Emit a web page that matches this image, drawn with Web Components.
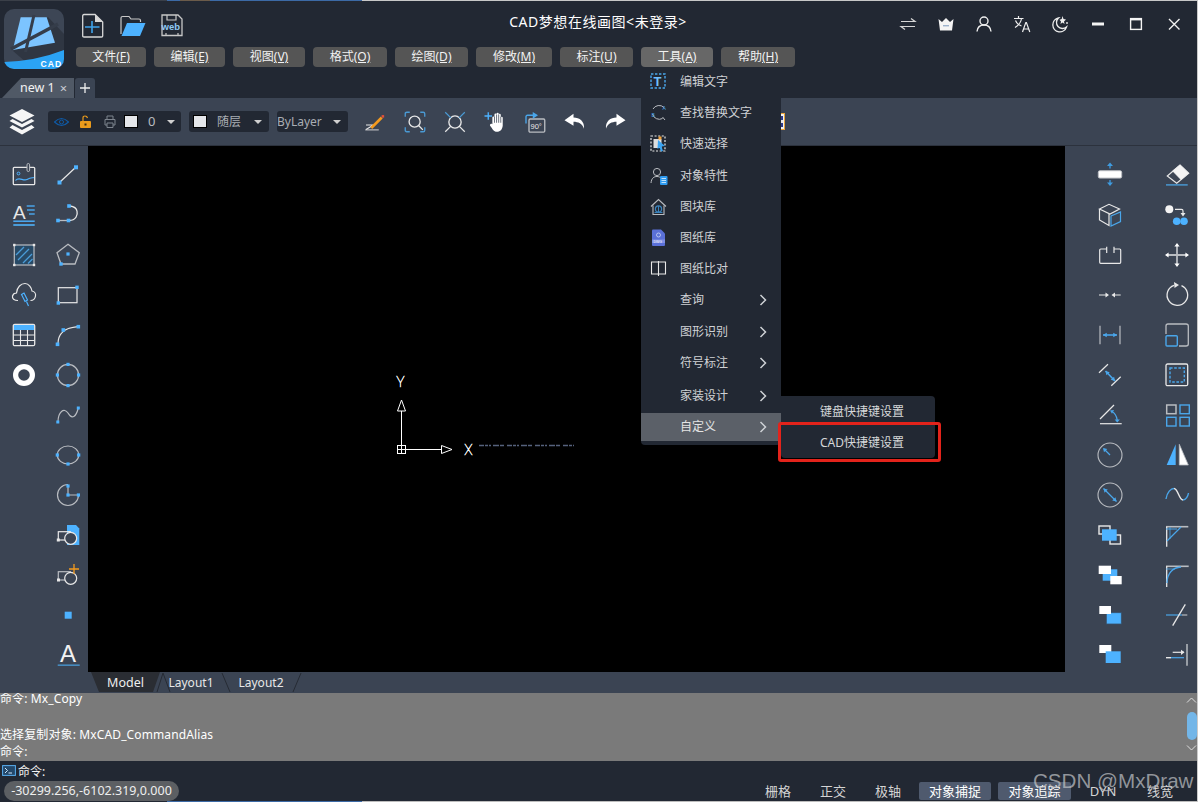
<!DOCTYPE html>
<html lang="zh"><head><meta charset="utf-8"><title>CAD梦想在线画图</title>
<style>
html,body{margin:0;padding:0;background:#222833;overflow:hidden}
body{font:12px/1.4 "Noto Sans","Noto Sans CJK SC",sans-serif;color:#e8e8e8}
</style></head><body><x-app></x-app>
<script>
const B='#4db2ff',W='#e8e8e8',G='#b9bcc1';
const sq=(x,y,s=4,c=B)=>`<rect x="${x-s/2}" y="${y-s/2}" width="${s}" height="${s}" fill="${c}"/>`;
const ln=(a,b,c,d,col=W,w=1.3)=>`<line x1="${a}" y1="${b}" x2="${c}" y2="${d}" stroke="${col}" stroke-width="${w}"/>`;
const R=(x,y,w,h,st=W,f='none',sw=1.3,r=0,extra='')=>`<rect x="${x}" y="${y}" width="${w}" height="${h}" rx="${r}" stroke="${st}" fill="${f}" stroke-width="${sw}" ${extra}/>`;
const P=(d,st=W,sw=1.3,f='none')=>`<path d="${d}" stroke="${st}" stroke-width="${sw}" fill="${f}"/>`;
const C=(x,y,r,st=W,sw=1.2,f='none')=>`<circle cx="${x}" cy="${y}" r="${r}" stroke="${st}" stroke-width="${sw}" fill="${f}"/>`;
const head=(x,y,t,col,s=4.4)=>`<path d="M${x} ${y}L${x-s*Math.cos(t-.55)} ${y-s*Math.sin(t-.55)}L${x-s*Math.cos(t+.55)} ${y-s*Math.sin(t+.55)}Z" fill="${col}"/>`;
const dbl=(a,b,c,d,col=B,w=1.6)=>{const an=Math.atan2(d-b,c-a);return ln(a,b,c,d,col,w)+head(c,d,an,col)+head(a,b,an+Math.PI,col)};
const T=(x,y,s,fs,f=W,extra='')=>`<text x="${x}" y="${y}" font-size="${fs}" fill="${f}" font-family="'Liberation Sans',sans-serif" ${extra}>${s}</text>`;
const ICONS={
 image:R(5.3,8.3,21.4,17.4,W,'none',1.3,1)+R(19,4.5,2.6,8,G,'#3b4453',1,1.3)+P('M7.5 21.5C11 17 15 22.5 19 20.5S24 19 26 18.5',B,1.2)+C(10.5,14.5,1.4,B,1),
 line:ln(8,23,23.5,8.5,W,1.2)+sq(7.5,23.5)+sq(24,8.3),
 mtext:T(5,19.5,'A',19,W)+ln(18.7,7,26.7,7,B)+ln(19,11,26.7,11,B)+ln(21,15,26.7,15,B)+R(5.3,21.5,21.4,1.4,'none',B,0)+R(5.3,25,21.4,2,'none','#4a9cd8',0),
 hatch:R(6.3,6,19.7,20,G,'#284a66',1.2)+P('M8 16L16 8M10 21L21 10M15 24L24 15M20 24.5L24.5 20','#4a9cd8',1.3)+sq(6.3,6,2.4,W)+sq(26,6,2.4,W)+sq(6.3,26,2.4,W)+sq(26,26,2.4,W),
 poly:P('M16 5.3L27.3 13.7L23 25H9L5 13.7Z',G,1.3)+sq(16,15,3.2)+sq(9,25,3.4),
 cloud:P('M10 21.5C6 21.5 4 19.5 4.5 17C5 15 7 14 8.5 14C9 8 13 4.5 17 4.5C21 4.5 23.5 9 24 12C26.5 12.5 28 14.5 27.5 17C27 20 25 21.5 22.5 21.5',W,1.2)+P('M13.5 15.5L16 14L19.5 21L17 22.5Z',B,1.2)+ln(18.5,22.5,20.5,27,B,1.2),
 rect:R(6.3,8.7,18.7,15,W,'none',1.2)+sq(25,8.3,3.4)+sq(6.3,24,3.4),
 table:R(5.3,5.3,21.4,21.4,W,'none',1.3,1.5)+`<rect x="6" y="6" width="20" height="5" fill="${B}"/>`+P('M5.5 16H26.5M5.5 21.5H26.5M12.5 11V26.5M19.5 11V26.5',W,1.1),
 arc:P('M6 25C6 16 10 9 26 7.7',W,1.2)+sq(5.5,25.3,3.6)+sq(11.3,11,3.6)+sq(26.3,7.7,3.6),
 donut:C(16,16,8.4,'#fff',5.2),
 circle:C(16,16,10.6,G,1.2)+sq(16,5.4,3.2)+sq(16,26.6,3.2)+sq(5.4,16,3.2)+sq(26.6,16,3.2),
 spline:P('M6 23C6 13 12 8 16 14C20 21 24 18 26.3 9',G,1.2)+sq(5.8,23,3)+sq(26.3,9,3),
 ellipse:`<ellipse cx="16" cy="16" rx="10.7" ry="9" stroke="${G}" fill="none" stroke-width="1.2"/>`+sq(5.3,16,3.2)+sq(26.7,16,3.2)+sq(16,25,3.2),
 pie:P('M16 6.5V16H26.5A10.5 10.5 0 1 1 16 5.5',G,1.2)+sq(16,7,3.2)+sq(16,16,3.2)+sq(26.4,16,3.2),
 block:P('M15 6H24L27.3 9.5V26H15Z',B,0,B)+R(6.3,12.7,12,8.3,W,'none',1.2)+C(18.7,19.3,6,W,1.2,'#3b4453')+sq(6.3,21,3,W),
 blockadd:R(6.3,12.7,12,8.3,G,'none',1.2)+C(18.7,19.3,6,W,1.2,'#3b4453')+sq(6.5,21,3,W)+P('M22 5V15M17 10H27','#f39a1e',1.3),
 point:`<rect x="12.7" y="12.7" width="7" height="7" fill="${B}"/>`,
 text:T(8,23.3,'A',24,'#f2f2f2')+R(5.7,25.5,22,1.3,'none','#4a9cd8',0),
 stretch:R(4.3,11.7,23.4,7.4,G,'#fff',1,1.5)+ln(16,5,16,9.6,'#3f9ce0',1.3)+P('M16 3.6L19 7H13Z','none',0,'#3f9ce0')+ln(16,21,16,25,'#3f9ce0',1.3)+P('M16 27L19 23.6H13Z','none',0,'#3f9ce0'),
 erase:P('M19 6L27.7 14.3L15.7 24.3L6.3 17Z',W,1.2)+P('M19 6L27.7 14.3L20 20.8L11.5 12Z',W,.5,'#f4f4f4')+R(5,25.2,21.7,1.4,'none','#4a9cd8',0),
 cube:P('M5.5 10L15 5.3L25.5 10L16 15ZM5.5 10V21L15 26.5V15',W,1.2)+P('M17 17L26.5 13V22.5L17 27Z','#4aa6ea',1.2),
 copyb:C(8.3,10.3,4,'#fff',0,'#f4f4f4')+C(15.7,22.3,3.8,B,0,B)+C(23,22.3,3.8,B,0,B)+P('M14 10.3H20.5Q22 10.3 22 12V15',W,1.2)+P('M19.5 14H24.5L22 17.5Z',W,0,W),
 gap:P('M12.7 10H6.7Q5.7 10 5.7 11V23.3Q5.7 24.3 6.7 24.3H25.7Q26.7 24.3 26.7 23.3V11Q26.7 10 25.7 10H20M12.7 7.7V14M20 7.7V14',W,1.2),
 move:P('M16 5.5V26.5M5.5 16H26.5',G,1.8)+P('M16 4L18.6 7.6H13.4ZM16 28L18.6 24.4H13.4ZM4 16L7.6 13.4V18.6ZM28 16L24.4 13.4V18.6Z',W,0,'#fff'),
 join:P('M5 16H13M26.7 16H19',W,1.2)+P('M15 16L11.5 13.4V18.6ZM17.5 16L21 13.4V18.6Z',W,0,W),
 rotate:P('M20.5 6.6A10.3 10.3 0 1 1 13 6.3',W,1.3)+P('M13 3L18 6L13.5 9Z',W,0,W),
 dim:ln(6,6.7,6,25.3,G,1.2)+ln(26,6.7,26,25.3,G,1.2)+dbl(9,16,23,16,'#4aa6ea'),
 scale:P('M5 15V7Q5 5 7 5H25Q27.3 5 27.3 7V25Q27.3 27 25 27H18',G,1.3)+R(5,16.7,11.3,10.3,'#4aa6ea','none',1.4,1),
 offs:R(5,5,21.7,21.7,W,'none',1.3,1.5)+R(9,9,14.3,14,'#4aa6ea','none',1.4,0,'stroke-dasharray="2.6 1.6"'),
 dimal:ln(5,13.7,14,5.3,W,1.2)+ln(17.3,26.7,26.7,17.7,W,1.2)+dbl(11.5,12,21,22,'#4aa6ea'),
 angle:ln(6,20,20,6,W,1.2)+ln(6,24.7,27.7,24.7,W,1.2)+P('M17.3 12Q22.5 15 23.2 21','#4aa6ea',1.3)+P('M23.3 23.5L20.6 20.4H25.8Z','none',0,'#4aa6ea')+P('M16 11.5L20 11L18 14.8Z','none',0,'#4aa6ea'),
 array:R(5.7,6,9.3,8.7,G,'none',1.5)+R(19,6,9.3,8.7,'#4aa6ea','none',1.4)+R(5.7,18.3,9.3,8.7,'#4aa6ea','none',1.4)+R(19,18.3,9.3,8.7,'#4aa6ea','none',1.4),
 rad:C(16,16,12,G,1.1)+ln(16,16,10,10,'#4aa6ea',1.2)+head(9,9,Math.PI*1.25,'#4aa6ea'),
 mirror:P('M14.7 5.3V26H5.7Z','none',0,B)+P('M18.3 5.3V26H27.3Z',G,.8,'#fff'),
 dia:C(16,16,12,G,1.1)+dbl(9.5,9.5,22.5,22.5,'#4aa6ea',1.2),
 sine:P('M5 20C6 13 10 9.5 13 9.5',"#4aa6ea",1.4)+P('M13 9.5C17 9.5 18 21 22 21',W,1.4)+P('M22 21C25 21 27 17 27.5 14',"#4aa6ea",1.4),
 ordFront:R(5,7,11,8,W,'none',1.4)+R(16,16,10.5,9,W,'none',1.4)+`<rect x="8" y="10.3" width="14.7" height="11.4" fill="${B}"/>`,
 chamfer:P('M5 7.7H27.3',G,1.6)+ln(5.7,7.7,5.7,27.7,W,1.3)+ln(6,22,20,8,'#4aa6ea',1.3)+ln(5,10,16,10,'#4aa6ea',1)+ln(9,8,9,20,'#4aa6ea',.8),
 ordUp:`<rect x="8.7" y="10.3" width="14.6" height="11.4" fill="${B}"/><rect x="4.7" y="6.7" width="12.3" height="8.3" fill="#fff"/><rect x="16.3" y="17" width="11.4" height="8.3" fill="#fff"/>`,
 fillet:P('M5 7.3H27.7',G,1.6)+ln(5.7,7.3,5.7,28,W,1.3)+P('M6 24C6 14 12 8.5 20 8','#4aa6ea',1.3)+ln(5,10,14,10,'#4aa6ea',.8),
 ordTop:`<rect x="12.3" y="13.7" width="15" height="11.3" fill="${B}" stroke="#35526c" stroke-width=".8"/><rect x="5.3" y="7" width="11.7" height="8" fill="#fff"/>`,
 trim:ln(5,16,21,16,'#4aa6ea',1.2)+ln(21,16,26.3,16,G,1.2)+ln(24.3,5.3,11.7,26.7,W,1.3),
 ordBot:`<rect x="5.3" y="6" width="12" height="8" fill="#fff"/><rect x="11.7" y="12.3" width="15" height="11.7" fill="${B}"/>`,
 extend:ln(26,5,26,26.7,G,1.5)+ln(11.7,13.3,23,13.3,W,1.2)+P('M23.5 13.3L20 10.7V16Z',W,0,W)+ln(5,18.7,10,18.7,W,1.4)+ln(10,18.7,23,18.7,'#4aa6ea',1.2),
 hook:ln(7,21.5,17,21.5,G,1.3)+P('M17 21.5C24 21.5 26 16 25 12C24.5 9.5 22 7.5 18 7',W,1.3)+sq(6,21.5,3.6)+sq(16.5,21.5,3.6)+sq(17,7,3.6),
 sketch:P('M3 26.5H21',G,1.6)+P('M4 20H14L4 26',W,1.5)+ln(11,24,25,10,'#f39a1e',3.6)+sq(26.5,8.5,3.4,'#e2503a'),
 zoomw:P('M3 9V4.5Q3 3 5 3H9M23 3H27Q29 3 29 5V9M29 23V27Q29 29 27 29H23M9 29H5Q3 29 3 27V23','#4a9ad4',1.8)+C(15.5,15.5,7.4,W,1.8)+ln(20.8,20.8,26.5,26.5,W,1.8),
 zoome:C(16,16,8.2,W,1.8)+ln(3,3,10.5,10.5,'#4a9ad4',1.6)+ln(29,3,21.5,10.5,'#4a9ad4',1.6)+ln(3,29,10.5,21.5,W,1.6)+ln(29,29,21.5,21.5,W,1.6),
 hand:P('M2 8H12M7 3V13',B,1.8)+P('M12.5 17V10a1.4 1.4 0 0 1 2.8 0V6a1.4 1.4 0 0 1 2.8 0V5a1.4 1.4 0 0 1 2.8 0V6.5a1.4 1.4 0 0 1 2.8 0V10a1.4 1.4 0 0 1 2.6 0V21C25.6 27 22 29 18.5 29C14 29 13 25.5 9.5 21C8.5 19.5 10.5 17.5 12.5 19Z','#fff',0,'#fff')+P('M15.3 9V17M18.1 6V17M20.9 6V17M23.7 9V17','#3b4453',1),
 rot90:R(8,12,21,17.5,G,'none',1.8,1.5)+T(10,25.8,'90°',10,W)+P('M4 18V9Q4 7 6 7H14','#4aa6ea',1.8)+P('M20 7L13 2.5V11.5Z','none',0,'#4aa6ea'),
 undo:P('M14 5L2 13.5L14 21V15.5C20 15.5 26 18 28 25C29 15 22 10 14 10Z','#fff',0,'#fff'),
 redo:P('M18 5L30 13.5L18 21V15.5C12 15.5 6 18 4 25C3 15 10 10 18 10Z','#fff',0,'#fff'),
};
const MI={
 edit:R(1,1,14,14,'#4aa6ea','none',1.4,0,'stroke-dasharray="2.4 1.6"')+T(3.4,13,'T',13,'#6fc0ff',"font-family=\"'Liberation Serif',serif\" font-weight=\"bold\""),
 find:P('M14 3.5A7 7 0 0 0 3 5',G,1)+P('M2.5 10A7 7 0 0 0 12.5 14.5',G,1,'none')+ln(12.5,13,15,16,G,1)+T(12.5,6,'A',5,'#4aa6ea')+T(1.5,12.5,'B',5,'#4aa6ea'),
 quick:R(1,1,14,15,W,'none',1.2,0,'stroke-dasharray="2 1.6"')+`<rect x="3.5" y="4" width="8" height="9" fill="#ddd"/>`+P('M8 5L15 11L11.5 11.5L13 16L11 16.5L9.5 12.5L7.5 14Z','none',0,'#3ba4f2')+sq(10,3,3,'#f3a33a'),
 prop:C(7,5,3.6,G,1)+P('M1 16C1.5 11 4 9.5 7 9.5C8.5 9.5 9.5 10 10 10.5',G,1)+`<rect x="10" y="9" width="7.5" height="9" rx="1" fill="#2f9bf0"/>`+P('M11.5 11.5H16M11.5 13.5H16M11.5 15.5H16','#fff',.7),
 lib:P('M1 8.5L8.5 1.5L16 8.5',G,1.1)+P('M3 7.5V16.5H14V7.5',G,1.1)+C(8.5,11,3.1,'#3b84bd',1.2)+ln(8.5,8,8.5,14,'#3b84bd',1)+ln(4.5,14.5,12.5,14.5,'#3b84bd',1),
 dwg:P('M2 1.5Q2 .5 3 .5H11L15 4.5V16Q15 17 14 17H3Q2 17 2 16Z','none',0,'#5a70d8')+C(8.5,6,2,'#c9d3f5',.8)+`<rect x="2" y="10.5" width="13" height="3.5" fill="#7f90e4"/>`+T(3.5,13.7,'DWG',3.4,'#fff'),
 cmp:P('M8.5 2H1.5V14H8.5M8.5 2H15.5V14H8.5M8.5 1V16',W,1.1),
};
function tpl(css,html){return `<style>${css}</style>${html}`}
class Base extends HTMLElement{constructor(){super();this.attachShadow({mode:'open'});}}
class XIcon extends Base{connectedCallback(){const n=this.getAttribute('name');const s=this.getAttribute('size')||32;
 this.shadowRoot.innerHTML=tpl(':host{display:flex;align-items:center;justify-content:center;flex:none}svg{display:block}',
 `<svg width="${s}" height="${s}" viewBox="0 0 32 32">${ICONS[n]||''}</svg>`);}}
class XMenuBtn extends Base{connectedCallback(){this.shadowRoot.innerHTML=tpl(`:host{display:flex;align-items:center;justify-content:center;height:20px;border-radius:4px;background:var(--b,#555);color:#f2f2f2;font-size:12px;line-height:20px;flex:none}`,'<slot></slot>');}}
class XHeader extends Base{connectedCallback(){
 const menus=[['文件','F',70],['编辑','E',71],['视图','V',72],['格式','O',74],['绘图','D',73],['修改','M',76],['标注','U',73],['工具','A',72],['帮助','H',74]];
 this.shadowRoot.innerHTML=tpl(`
 :host{display:flex;flex-direction:column;background:#222833;height:97px;overflow:hidden}
 .top{display:flex;height:76px;flex:none}
 .logo{margin:8px 12px 0 4px;width:60px;height:60px;flex:none}
 .col{flex:1;display:flex;flex-direction:column;min-width:0}
 .r1{display:flex;height:46px;flex:none}
 .q{display:flex;width:231px;flex:none;padding:12px 0 0 5px;box-sizing:border-box;align-items:flex-start}
 .title{flex:1;text-align:center;font-size:14px;line-height:20px;padding-top:11px;color:#fff;letter-spacing:.55px;white-space:nowrap}
 .win{display:flex;width:304px;flex:none;margin-right:4px;padding-top:4px;box-sizing:border-box;height:42px}
 .win div{width:38px;display:flex;align-items:center;justify-content:center}
 .menus{display:flex;gap:8px}
 .tabs{display:flex;height:20px;padding-left:2px;gap:1px}
 .tab{width:72px;height:20px;background:#505966;clip-path:polygon(19px 0,100% 0,100% 100%,0 100%);display:flex;align-items:center;padding-left:18px;box-sizing:border-box;font-size:12.5px;color:#f2f2f2;line-height:20px}
 .tab span{color:#c8ccd2;margin-left:5px;font-size:13px}
 .add{width:20px;height:20px;background:#3b4453;border-radius:3px 3px 0 0;color:#e8e8e8;display:flex;align-items:center;justify-content:center}
 svg{display:block}u{text-underline-offset:1px}
 `,`<div class="top">
 <svg class="logo" viewBox="0 0 60 60"><defs><clipPath id="l"><rect width="60" height="60" rx="10"/></clipPath></defs><g clip-path="url(#l)"><rect width="60" height="60" fill="#3d4655"/>
 <path d="M9 42L44 8L60 25V60H30Z" fill="#2f3642"/>
 <path d="M16.7 8.3H42.7L51 33.7L8.7 41Z" fill="#7cc4ff"/>
 <path d="M30 6L21.5 43" stroke="#353d4a" stroke-width="3" fill="none"/><path d="M7 40L54 15" stroke="#353d4a" stroke-width="3.6" fill="none"/>
 <path d="M0 53Q32 52 60 41V60H0Z" fill="#2ba3f4"/>
 <text x="36.5" y="57.5" font-size="8.6" font-weight="bold" fill="#fff" letter-spacing="1" font-family="'Liberation Sans',sans-serif">CAD</text></g></svg>
 <div class="col"><div class="r1"><div class="q">
 <svg width="24" height="25" viewBox="0 0 24 25"><path d="M1.7 3Q1.7 1.5 3 1.5H14L21.7 9V23Q21.7 24 20.5 24H3Q1.7 24 1.7 23Z" fill="none" stroke="#d8d8d8" stroke-width="1.3"/><path d="M14 1.5V9H21.7Z" fill="#d8d8d8"/><path d="M11 8V20M4 14H18.5" stroke="#3fa3ec" stroke-width="1.6"/></svg>
 <svg style="margin-left:15px;margin-top:2px" width="26" height="22" viewBox="0 0 26 22"><path d="M1 19V3Q1 1.5 2.5 1.5H9L11 4H19Q20.5 4 20.5 5.5V7" fill="none" stroke="#c8c8c8" stroke-width="1.2"/><path d="M7 8H25.5L20 21H1.5Z" fill="#4db2ff"/></svg>
 <svg style="margin-left:14px" width="24" height="24" viewBox="0 0 24 24"><path d="M2 2H18L22 6V22.5H2Z" fill="none" stroke="#c8c8c8" stroke-width="1.3"/><path d="M7 2V7H16V2M6 22.5V20M18 22.5V20" fill="none" stroke="#c8c8c8" stroke-width="1.2"/><text x="1.5" y="17" font-size="9.5" font-weight="bold" fill="#8fc8f4" font-family="'Liberation Sans',sans-serif">web</text></svg>
 </div><div class="title">CAD梦想在线画图&lt;未登录&gt;</div><div class="win">
 <div><svg width="18" height="18" viewBox="0 0 18 18"><path d="M2 6.5H16L12 3.5M16 11.5H2L6 14.5" fill="none" stroke="#d6d6d6" stroke-width="1.2"/></svg></div>
 <div><svg width="18" height="18" viewBox="0 0 18 18"><path d="M1.5 4L5 7L9 3L13 7L16.5 4L15 15.5H3Z" fill="#f4f4f4"/><rect x="6" y="10" width="6" height="1.4" fill="#9cb2cc"/></svg></div>
 <div><svg width="18" height="18" viewBox="0 0 18 18"><circle cx="9" cy="6" r="4" fill="none" stroke="#eee" stroke-width="1.4"/><path d="M2 16.5C2.5 12 5.5 10 9 10S15.5 12 16 16.5" fill="none" stroke="#eee" stroke-width="1.4"/></svg></div>
 <div><svg width="18" height="18" viewBox="0 0 18 18"><path d="M1 3.5H10.5M5.5 1V3.5M2 12.5C6 10 8 7 8.5 3.5M2.5 5.5C3.5 8 5.5 10 8.5 11" fill="none" stroke="#eee" stroke-width="1.2"/><path d="M9.5 17L12.8 7.5H13.4L16.8 17M10.6 14H15.7" fill="none" stroke="#eee" stroke-width="1.2"/></svg></div>
 <div><svg width="18" height="18" viewBox="0 0 18 18"><path d="M7.5 3A7 7 0 1 0 15.5 12A6 6 0 0 1 7.5 3Z" fill="none" stroke="#eee" stroke-width="1.3"/><path d="M11.5 1L12.5 4L15 4.5L13 6.5L13.5 9L11.5 7.5L9.5 9L10 6.5L8.5 4.8L10.7 4Z" fill="#eee"/><circle cx="16" cy="8" r=".9" fill="#eee"/></svg></div>
 <div><svg width="14" height="14" viewBox="0 0 14 14"><rect x="1" y="5.5" width="12" height="3" fill="#f4f4f4"/></svg></div>
 <div><svg width="14" height="14" viewBox="0 0 14 14"><rect x="1.6" y="1.6" width="10.8" height="10.8" fill="none" stroke="#f4f4f4" stroke-width="1.4"/><rect x="1" y="1" width="12" height="2.4" fill="#f4f4f4"/></svg></div>
 <div><svg width="14" height="14" viewBox="0 0 14 14"><path d="M2 2L12.5 12.5M12.5 2L2 12.5" stroke="#f0f0f0" stroke-width="1.4"/></svg></div>
 </div></div>
 <div class="menus">${menus.map((m,i)=>`<x-menu-btn style="width:${m[2]}px${i==7?';--b:#676767':''}">${m[0]}<u>(${m[1]})</u></x-menu-btn>`).join('')}</div>
 </div></div>
 <div style="height:1px;flex:none"></div>
 <div class="tabs"><div class="tab">new 1<span>×</span></div><div class="add"><svg width="12" height="12" viewBox="0 0 12 12"><path d="M6 1V11M1 6H11" stroke="#eee" stroke-width="1.3"/></svg></div></div>`);
}}
class XPill extends Base{connectedCallback(){this.shadowRoot.innerHTML=tpl(`:host{display:flex;align-items:center;height:21px;background:#222833;border-radius:3px;color:#a9adb3;font-size:12px;line-height:21px;flex:none;box-sizing:border-box;position:relative}
 .c{width:0;height:0;border:4.5px solid transparent;border-top:4.5px solid #d0d0d0;border-bottom:0;margin-left:auto;margin-right:var(--cr,7px);flex:none}`,`<slot></slot><i class="c"></i>`);}}
class XToolbar extends Base{connectedCallback(){
 const sw='display:block;width:12px;height:11px;background:#e4e6ea;border:1px solid #000;flex:none';
 const tools=['sketch','zoomw','zoome','hand','rot90','undo','redo'];
 this.shadowRoot.innerHTML=tpl(`:host{display:flex;align-items:center;background:#3b4453;height:48px;padding-left:9px;box-sizing:border-box;border-bottom:1px solid #2c323d}
 svg{display:block;flex:none}.gap8{margin-left:8px}x-icon{width:40px}`,
 `<svg width="26" height="28" viewBox="0 0 26 28"><path d="M13 1L25.5 7.5L13 14L.5 7.5Z" fill="#f6f6f6"/><path d="M3.5 11L.5 13L13 19.5L25.5 13L22.5 11L13 16Z" fill="#f6f6f6"/><path d="M3.5 17L.5 19.5L13 26.5L25.5 19.5L22.5 17L13 22Z" fill="#f6f6f6"/></svg>
 <x-pill style="width:133px;margin-left:13px;--cr:6px"><svg style="margin-left:6px" width="15" height="10" viewBox="0 0 15 10"><path d="M.5 5Q7.5 -2 14.5 5Q7.5 12 .5 5Z" fill="none" stroke="#0f5aa6" stroke-width="1.1"/><circle cx="7.5" cy="5" r="2" fill="none" stroke="#0f5aa6"/></svg>
 <svg style="margin-left:11px" width="11" height="13" viewBox="0 0 11 13"><rect x="0" y="6" width="11" height="7" rx="1" fill="#e99a1c"/><path d="M3 6V3Q3 1 5 1T7.5 3" fill="none" stroke="#e99a1c" stroke-width="1.2"/><rect x="4.5" y="8.5" width="2" height="2" fill="#3b2b10"/></svg>
 <svg style="margin-left:13px" width="12" height="13" viewBox="0 0 12 13"><path d="M3 4V1H9V4M3 10H1V4.5H11V10H9M3 8H9V12.5H3Z" fill="none" stroke="#7d848e" stroke-width="1"/></svg>
 <span style="${sw};margin-left:8px"></span><span style="margin-left:10px;color:#b8bbc0;font-size:13px">0</span></x-pill>
 <x-pill class="gap8" style="width:80px"><span style="${sw};margin-left:4px"></span><span style="margin-left:10px">随层</span></x-pill>
 <x-pill class="gap8" style="width:71px"><span>ByLayer</span></x-pill>
 <span style="width:7px;flex:none"></span>${tools.map(n=>`<x-icon name="${n}" size="24"></x-icon>`).join('')}
 <svg style="margin-left:136px" width="14" height="17" viewBox="0 0 14 17"><rect x=".5" y=".5" width="13" height="16" fill="#f2f2f2" stroke="#e8a33a"/><rect x="8" y="3" width="4" height="11" fill="#2a3a8a"/><rect x="10" y="7" width="2" height="3" fill="#e8e8e8"/></svg>`);
}}
class XSidebar extends Base{connectedCallback(){const list=this.getAttribute('icons').split(',');
 this.shadowRoot.innerHTML=tpl(`:host{display:grid;grid-template-columns:32px 32px;grid-auto-rows:40px;column-gap:var(--g,12px);padding:9px 0 0 var(--p,8px);background:#3b4453;box-sizing:border-box;align-content:start}x-icon{height:40px}`,
 list.map(n=>n=='-'?'<span></span>':`<x-icon name="${n}"></x-icon>`).join(''));}}
class XCanvas extends Base{connectedCallback(){this.shadowRoot.innerHTML=tpl(`:host{display:block;background:#000;position:relative;overflow:hidden}
 .ucs{position:absolute;left:306px;top:226px}`,
 `<svg class="ucs" width="200" height="90" viewBox="0 0 200 90">
 <text x="2.2" y="14.5" font-size="14" font-weight="100" fill="#fff" stroke="#fff" stroke-width=".45" font-family="Roboto,'Liberation Sans',sans-serif">Y</text>
 <path d="M7.5 39V73" stroke="#fff"/><path d="M7.5 28L11.5 39H3.5Z" fill="none" stroke="#fff"/>
 <rect x="3.5" y="73.5" width="8" height="8" fill="none" stroke="#fff"/><path d="M3.5 77.5H11.5M7.5 73.5V81.5" stroke="#fff"/>
 <path d="M11.5 77.5H47.5" stroke="#fff"/><path d="M47.5 73.5L58 77.5L47.5 81.5Z" fill="none" stroke="#fff"/>
 <text x="70.3" y="82.5" font-size="14" font-weight="100" fill="#fff" stroke="#fff" stroke-width=".45" font-family="Roboto,'Liberation Sans',sans-serif">X</text>
 <path d="M85 73.5H180" stroke="#55617c" stroke-width="1.6" stroke-dasharray="5 1 3 1 2 2 6 1 4 3"/></svg>`);}}
class XLayoutTabs extends Base{connectedCallback(){this.shadowRoot.innerHTML=tpl(`:host{display:flex;background:#3b4453;height:21px;padding-left:91px;box-sizing:border-box;font-size:12px;line-height:22px;color:#e8e8e8;position:relative}
 .m{width:69px;height:20px;background:#2a2d33;clip-path:polygon(0 0,100% 0,62px 100%,8px 100%);text-align:center;color:#eee;font-size:12.5px}
 .l{text-align:center;width:70px;height:20px}svg{position:absolute;left:91px;top:0}`,
 `<div class="m">Model</div><div class="l" style="margin-left:-4px">Layout1</div><div class="l">Layout2</div>
 <svg width="220" height="21" viewBox="0 0 220 21"><path d="M72 1L66 20M72 1L79 20M131 1L139 20M210 1L202 20" stroke="#262b34" fill="none"/></svg>`);}}
class XCommand extends Base{connectedCallback(){this.shadowRoot.innerHTML=tpl(`:host{display:flex;background:#7a7a7a;height:68px;color:#fff;font-size:12px;letter-spacing:.12px}
 .t{flex:1;white-space:nowrap}.t div{line-height:17.7px;height:17.7px}.t .a{line-height:12px;height:12px}.t .b{height:20.5px}
 .s{width:11px;flex:none;display:flex;flex-direction:column;align-items:center;position:relative}
 .th{width:10px;height:28px;background:#73b6e8;border-radius:5px;margin-top:9px;flex:none}svg{display:block;flex:none}`,
 `<div class="t"><div class="a">命令: Mx_Copy</div><div class="b"></div><div>选择复制对象: MxCAD_CommandAlias</div><div>命令:</div></div><div class="s"><svg style="margin-top:4px" width="11" height="6" viewBox="0 0 11 6"><path d="M1 5.5L5.5 1L10 5.5" fill="none" stroke="#ddd"/></svg><div class="th"></div><svg style="margin-top:5px" width="11" height="6" viewBox="0 0 11 6"><path d="M1 .5L5.5 5L10 .5" fill="none" stroke="#ddd"/></svg></div>`);}}
class XStatus extends Base{connectedCallback(){this.shadowRoot.innerHTML=tpl(`:host{display:block;background:#222833;height:41px;position:relative;overflow:hidden;font-size:13px;color:#e8e8e8}
 .cmd{display:flex;align-items:center;height:20px;padding:2px 0 0 2px;box-sizing:border-box;line-height:18px;color:#f4f4f4;font-size:12px}
 .cmd svg{margin-right:2px;margin-top:-3px;flex:none}
 .row{display:flex;height:20px;align-items:flex-start;padding-left:4px}
 .co{width:175px;height:20px;border-radius:10px;background:#5c5f63;color:#eee;font-size:12.5px;line-height:20px;text-align:center;flex:none}
 .its{display:flex;margin-left:575px;gap:7px}
 .it{width:48px;text-align:center;line-height:20px;color:#d4d4d4;flex:none}
 .on{background:#4f5a6e;color:#fff;border-radius:2px;width:72px;height:18px;margin-top:1px;line-height:18px}
 .wm{position:absolute;left:1033px;top:8px;font:20.6px/24px "Liberation Sans",sans-serif;color:rgba(190,192,196,.72);white-space:nowrap}
 .bot{position:absolute;left:0;right:0;bottom:0;height:1px;background:linear-gradient(90deg,#222833 0 167px,#3c6aa6 167px 362px,#bdbdbd 362px)}`,
 `<div class="cmd"><svg width="14" height="11" viewBox="0 0 14 11"><rect x=".6" y=".6" width="12.8" height="9.8" fill="#24486a" stroke="#59aef0"/><path d="M3 3L5.5 5.5L3 8M6.5 8H10" fill="none" stroke="#cfe8ff"/></svg><span>命令:</span></div>
 <div class="row"><div class="co">-30299.256,-6102.319,0.000</div><div class="its"><div class="it">栅格</div><div class="it">正交</div><div class="it">极轴</div><div class="it on">对象捕捉</div><div class="it on" style="width:73px">对象追踪</div><div class="it" style="margin-left:1px">DYN</div><div class="it" style="margin-left:2px">线宽</div></div></div>
 <div class="wm">CSDN @MxDraw</div><div class="bot"></div>`);}}
class XMenuItem extends Base{connectedCallback(){const ic=this.getAttribute('icon'),sub=this.hasAttribute('sub');
 this.shadowRoot.innerHTML=tpl(`:host{display:flex;align-items:center;height:28px;padding-left:9px;color:#d0d2d5;font-size:12px;line-height:28px;box-sizing:border-box;flex:none}
 :host([active]){background:#5b6068;color:#e4e4e4}.i{width:18px;height:18px;margin-right:12px;flex:none}svg{display:block}.c{margin-left:auto;margin-right:14px}`,
 `<div class="i">${ic?`<svg width="18" height="18" viewBox="0 0 18 18">${MI[ic]}</svg>`:''}</div><slot></slot>${sub?'<svg class="c" width="8" height="12" viewBox="0 0 8 12"><path d="M1.5 1L6.5 6L1.5 11" fill="none" stroke="#cfd2d6" stroke-width="1.5"/></svg>':''}`);}}
class XMenu extends Base{connectedCallback(){this.shadowRoot.innerHTML=tpl(`:host{display:flex;flex-direction:column;gap:3.2px;position:absolute;left:641px;top:67px;width:140px;background:#222833;border-radius:0 0 4px 4px;padding:1px 0 4px;box-sizing:border-box}`,
 `<x-menu-item icon="edit">编辑文字</x-menu-item><x-menu-item icon="find">查找替换文字</x-menu-item><x-menu-item icon="quick">快速选择</x-menu-item><x-menu-item icon="prop">对象特性</x-menu-item><x-menu-item icon="lib">图块库</x-menu-item><x-menu-item icon="dwg">图纸库</x-menu-item><x-menu-item icon="cmp">图纸比对</x-menu-item><x-menu-item sub>查询</x-menu-item><x-menu-item sub>图形识别</x-menu-item><x-menu-item sub>符号标注</x-menu-item><x-menu-item sub style="margin-top:2px">家装设计</x-menu-item><x-menu-item sub active>自定义</x-menu-item>`);}}
class XSubmenu extends Base{connectedCallback(){this.shadowRoot.innerHTML=tpl(`:host{display:flex;flex-direction:column;position:absolute;left:781px;top:396px;width:154px;height:62px;background:#222833;border-radius:0 4px 4px 4px;color:#d6d8da;font-size:12px;line-height:31px;padding-left:39px;box-sizing:border-box}div:first-child{margin-top:-1px}`,
 `<div>键盘快捷键设置</div><div>CAD快捷键设置</div>`);}}
class XHighlight extends Base{connectedCallback(){this.shadowRoot.innerHTML=tpl(`:host{display:block;position:absolute;left:778px;top:422px;width:163px;height:40px;border:3px solid #e3231b;border-radius:3px;box-sizing:border-box;pointer-events:none}`,'');}}
class XApp extends Base{connectedCallback(){
 const L='image,line,mtext,hook,hatch,poly,cloud,rect,table,arc,donut,circle,-,spline,-,ellipse,-,pie,-,block,-,blockadd,-,point,-,text';
 const Rr='stretch,erase,cube,copyb,gap,move,join,rotate,dim,scale,dimal,offs,angle,array,rad,mirror,dia,sine,ordFront,chamfer,ordUp,fillet,ordTop,trim,ordBot,extend';
 this.shadowRoot.innerHTML=tpl(`:host{display:grid;width:1198px;height:802px;grid-template-rows:1px 97px 48px 526px 21px 68px 41px;position:relative;overflow:hidden;box-sizing:border-box;border-right:1px solid #c9c9c9}
 .strip{background:linear-gradient(90deg,#3a3f48 0 167px,#3c6aa6 167px 180px,#6b5b4a 180px 210px,#3c6aa6 210px 362px,#c8c8c8 362px)}
 .main{display:grid;grid-template-columns:88px 977px 132px;min-height:0}`,
 `<div class="strip"></div><x-header></x-header><x-toolbar></x-toolbar>
 <div class="main"><x-sidebar icons="${L}"></x-sidebar><x-canvas></x-canvas><x-sidebar icons="${Rr}" style="--p:29px;--g:35px"></x-sidebar></div>
 <x-layout-tabs></x-layout-tabs><x-command></x-command><x-status></x-status>
 <x-menu></x-menu><x-submenu></x-submenu><x-highlight></x-highlight>`);
}}
const defs={'x-icon':XIcon,'x-menu-btn':XMenuBtn,'x-header':XHeader,'x-pill':XPill,'x-toolbar':XToolbar,'x-sidebar':XSidebar,'x-canvas':XCanvas,'x-layout-tabs':XLayoutTabs,'x-command':XCommand,'x-status':XStatus,'x-menu-item':XMenuItem,'x-menu':XMenu,'x-submenu':XSubmenu,'x-highlight':XHighlight,'x-app':XApp};
for(const k in defs)customElements.define(k,defs[k]);
</script></body></html>
